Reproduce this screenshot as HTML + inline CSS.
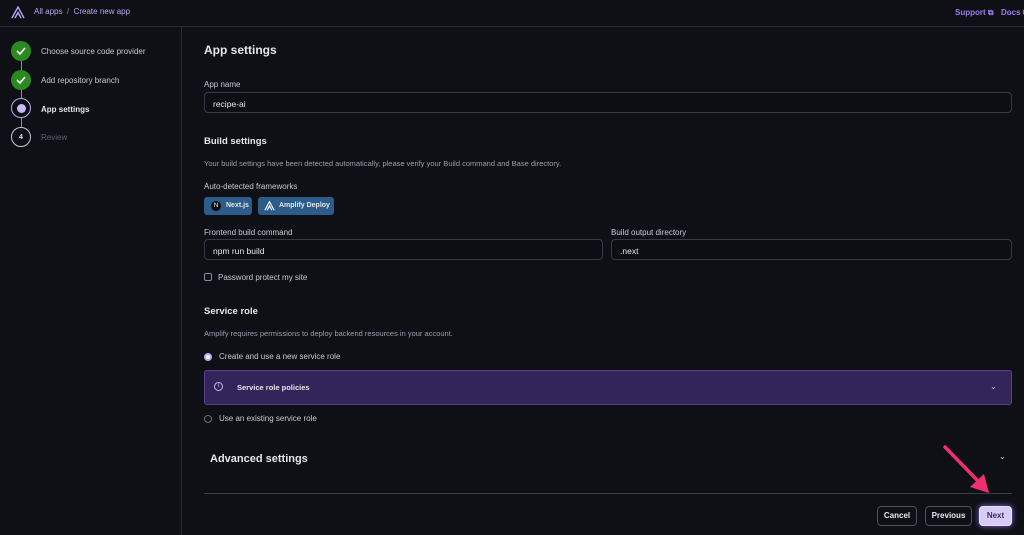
<!DOCTYPE html>
<html><head><meta charset="utf-8"><style>
*{box-sizing:border-box;margin:0;padding:0}
body{width:1024px;height:535px;background:#0e1016;font-family:"Liberation Sans",sans-serif;color:#e6e6ea;position:relative;overflow:hidden;font-size:8px}
.a{position:absolute;white-space:nowrap}
.inp{position:absolute;height:21px;border:1px solid #353a47;border-radius:4px;background:#0c0e13;color:#e8e8ee;font-size:8.5px;padding:6px 8px}
.lbl{color:#c8cad2;font-size:8px}
.circ{position:absolute;width:20px;height:20px;border-radius:50%;left:11px;display:flex;align-items:center;justify-content:center}
.btn{position:absolute;top:506px;height:20px;border:1px solid #4a4f5c;border-radius:4px;font-size:8px;font-weight:bold;text-align:center;line-height:18px;color:#e8e8ee}
</style></head><body>
<div class="a" style="left:0;top:26px;width:1024px;height:1px;background:#272b35"></div>
<div class="a" style="left:181px;top:27px;width:1px;height:508px;background:#272b35"></div>
<svg class="a" style="left:11px;top:6px" width="14" height="13" viewBox="0 0 14 13"><path d="M1 12 L7 1 L13 12 M4 12 L7 6.5 L10 12" fill="none" stroke="#b7a6f2" stroke-width="1.4"/></svg>
<div class="a" style="left:34px;top:7px;font-size:8px;color:#b9a8f0">All apps <span style="color:#8c90a0">&nbsp;/&nbsp;</span> Create new app</div>
<div class="a" style="left:955px;top:8px;font-size:8px;font-weight:bold;color:#9f7cf0">Support ⧉</div>
<div class="a" style="left:1001px;top:8px;font-size:8px;font-weight:bold;color:#9f7cf0">Docs ⧉</div>

<div class="a" style="left:21px;top:60px;width:1px;height:70px;background:#8a8e9a"></div>
<div class="circ" style="top:41px;background:#2a8a1f"><svg width="10" height="8" viewBox="0 0 10 8"><path d="M1 4 L4 7 L9 1" fill="none" stroke="#fff" stroke-width="1.6"/></svg></div>
<div class="circ" style="top:70px;background:#2a8a1f"><svg width="10" height="8" viewBox="0 0 10 8"><path d="M1 4 L4 7 L9 1" fill="none" stroke="#fff" stroke-width="1.6"/></svg></div>
<div class="circ" style="top:98px;background:#0e1016;border:1.5px solid #b9a8f0"><div style="width:9px;height:9px;border-radius:50%;background:#c7b8f6"></div></div>
<div class="circ" style="top:127px;background:#0e1016;border:1.5px solid #c8cad2;font-size:7px;font-weight:bold">4</div>
<div class="a" style="left:41px;top:47px;color:#c8cad2">Choose source code provider</div>
<div class="a" style="left:41px;top:76px;color:#c8cad2">Add repository branch</div>
<div class="a" style="left:41px;top:105px;font-weight:bold">App settings</div>
<div class="a" style="left:41px;top:133px;color:#5c606c">Review</div>

<div class="a" style="left:204px;top:43px;font-size:12px;font-weight:bold">App settings</div>
<div class="a lbl" style="left:204px;top:80px">App name</div>
<div class="inp" style="left:204px;top:92px;width:808px">recipe-ai</div>
<div class="a" style="left:204px;top:136px;font-size:9.5px;font-weight:bold">Build settings</div>
<div class="a" style="left:204px;top:159px;color:#9a9eaa;font-size:7.5px">Your build settings have been detected automatically, please verify your Build command and Base directory.</div>
<div class="a lbl" style="left:204px;top:182px">Auto-detected frameworks</div>
<div class="a" style="left:204px;top:197px;width:48px;height:18px;background:#2b5c8a;border-radius:3px;font-size:7px;font-weight:bold;padding:5px 0 0 22px">Next.js<div style="position:absolute;left:7px;top:4px;width:10px;height:10px;border-radius:50%;background:#0b0b0b;color:#fff;font-size:6px;text-align:center;line-height:10px;font-weight:normal">N</div></div>
<div class="a" style="left:258px;top:197px;width:76px;height:18px;background:#2b5c8a;border-radius:3px;font-size:7px;font-weight:bold;padding:5px 0 0 21px">Amplify Deploy<svg style="position:absolute;left:6px;top:4px" width="11" height="10" viewBox="0 0 14 13"><path d="M1 12 L7 1 L13 12 M4 12 L7 6.5 L10 12" fill="none" stroke="#fff" stroke-width="1.5"/></svg></div>
<div class="a lbl" style="left:204px;top:228px">Frontend build command</div>
<div class="inp" style="left:204px;top:239px;width:399px">npm run build</div>
<div class="a lbl" style="left:611px;top:228px">Build output directory</div>
<div class="inp" style="left:611px;top:239px;width:401px">.next</div>
<div class="a" style="left:204px;top:273px;width:8px;height:8px;border:1px solid #8a8e9a;border-radius:2px"></div>
<div class="a lbl" style="left:218px;top:273px">Password protect my site</div>
<div class="a" style="left:204px;top:306px;font-size:9.5px;font-weight:bold">Service role</div>
<div class="a" style="left:204px;top:329px;color:#9a9eaa;font-size:7.5px">Amplify requires permissions to deploy backend resources in your account.</div>
<div class="a" style="left:204px;top:353px;width:8px;height:8px;border-radius:50%;background:#fff;border:2px solid #b9a8f0"></div>
<div class="a lbl" style="left:219px;top:352px">Create and use a new service role</div>
<div class="a" style="left:204px;top:370px;width:808px;height:35px;background:#33245a;border:1px solid #5a3f9c;border-radius:3px"></div>
<div class="a" style="left:214px;top:382px;width:9px;height:9px;border-radius:50%;border:1px solid #c7b8f6;color:#c7b8f6;font-size:6px;text-align:center;line-height:7px">i</div>
<div class="a" style="left:237px;top:383px;font-weight:bold;font-size:7.5px">Service role policies</div>
<div class="a" style="left:990px;top:382px;font-size:8px;color:#d0d0d8">⌄</div>
<div class="a" style="left:204px;top:415px;width:8px;height:8px;border-radius:50%;border:1px solid #6a6e7a"></div>
<div class="a lbl" style="left:219px;top:414px">Use an existing service role</div>
<div class="a" style="left:210px;top:453px;font-size:11px;font-weight:bold">Advanced settings</div>
<div class="a" style="left:999px;top:452px;font-size:8px;color:#c8cad2">⌄</div>
<div class="a" style="left:204px;top:493px;width:808px;height:1px;background:#3a3e4a"></div>
<div class="btn" style="left:877px;width:40px">Cancel</div>
<div class="btn" style="left:925px;width:47px">Previous</div>
<div class="btn" style="left:979px;width:33px;background:#d8ccf7;border-color:#e8e0ff;color:#3a2f5e;box-shadow:0 0 6px #8a6fe0">Next</div>
<svg class="a" style="left:940px;top:443px" width="60" height="55" viewBox="0 0 60 55"><path d="M5 4 L40 40" stroke="#f0306e" stroke-width="3.5" stroke-linecap="round"/><path d="M49 50 L30 44 L44 31 Z" fill="#f0306e"/></svg>
</body></html>
